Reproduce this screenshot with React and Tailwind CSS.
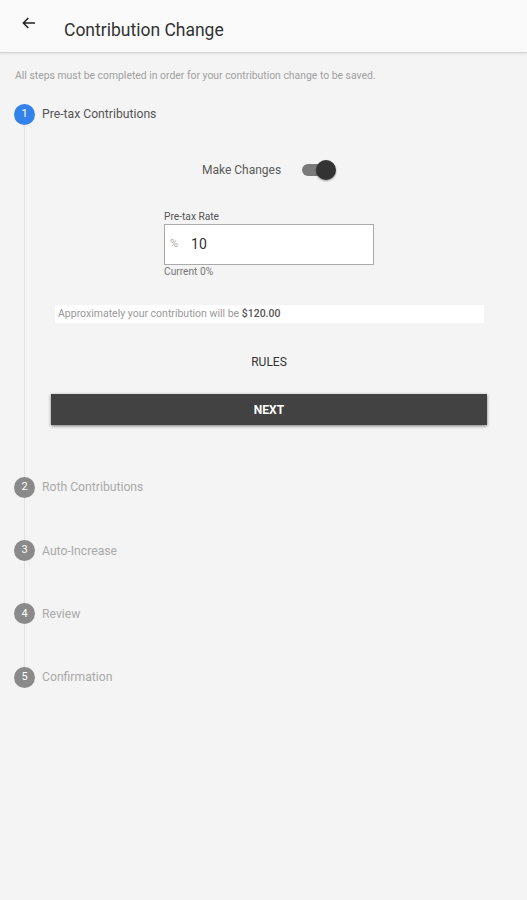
import React from "react";

const steps = ["Roth Contributions", "Auto-Increase", "Review", "Confirmation"];

export default function App() {
  return (
    <div
      className="min-h-[900px] w-full bg-[#f4f4f4]"
      style={{ fontFamily: "Roboto, 'Liberation Sans', sans-serif" }}
    >
      {/* header */}
      <div className="flex h-[53px] items-center border-b border-[#d4d4d4] bg-[#fafafa] shadow-[0_1px_2px_rgba(0,0,0,0.08)]">
        <svg
          className="ml-[21px] mt-[-6px]"
          width="16"
          height="16"
          viewBox="0 0 24 24"
          fill="none"
          stroke="#222"
          strokeWidth="2.2"
        >
          <path d="M21 12H4M11 4.5L3.5 12L11 19.5" />
        </svg>
        <h1 className="ml-[27px] mt-[8px] text-[17.5px] text-[#333]">
          Contribution Change
        </h1>
      </div>

      {/* note */}
      <p className="ml-[15px] mt-[16px] text-[10.4px] leading-[13px] text-[#a0a0a0]">
        All steps must be completed in order for your contribution change to be
        saved.
      </p>

      {/* step 1 */}
      <div className="ml-[14px] mt-[22px] flex items-center gap-[7px]">
        <div className="flex h-[21px] w-[21px] items-center justify-center rounded-full bg-[#3581ea] text-[11px] text-white">
          1
        </div>
        <span className="text-[12.2px] text-[#555]">Pre-tax Contributions</span>
      </div>

      <div className="ml-[24px] h-[352px] border-l border-[#e2e2e2] pl-[26px] pr-[40px] pt-[35px]">
        {/* make changes */}
        <div className="flex h-[20px] items-center justify-center gap-[21px]">
          <span className="text-[12px] text-[#5a5a5a]">Make Changes</span>
          <div className="relative h-[20px] w-[34px]">
            <div className="absolute left-0 top-[4px] h-[12px] w-[28px] rounded-full bg-[#7a7a7a]" />
            <div className="absolute right-0 top-0 h-[20px] w-[20px] rounded-full bg-[#333] shadow-[0_1px_2px_rgba(0,0,0,0.4)]" />
          </div>
        </div>

        {/* rate input */}
        <div className="mx-auto mt-[31px] w-[210px]">
          <div className="text-[10.2px] leading-[12px] text-[#555]">Pre-tax Rate</div>
          <div className="mt-[1px] flex h-[41px] items-center border border-[#aaa] bg-white pl-[5px]">
            <span className="text-[11px] text-[#aaa]">%</span>
            <span className="ml-[13px] text-[14px] text-[#333]">10</span>
          </div>
          <div className="mt-[1px] text-[10.2px] leading-[12px] text-[#777]">Current 0%</div>
        </div>

        {/* approx */}
        <div className="ml-[4px] mr-[3px] mt-[27px] flex h-[18px] items-center bg-white pl-[3px] text-[10.5px] text-[#999]">
          Approximately your contribution will be&nbsp;
          <span className="font-medium text-[#555]">$120.00</span>
        </div>

        <div className="mt-[32px] text-center text-[12px] leading-[14px] text-[#333]">
          RULES
        </div>

        <button className="mt-[25px] flex h-[31px] w-full items-center justify-center bg-[#424242] text-[12px] font-bold text-white shadow-[0_1px_3px_rgba(0,0,0,0.5)]">
          NEXT
        </button>
      </div>

      {/* remaining steps */}
      {steps.map((s, i) => (
        <div key={s}>
          <div className="ml-[14px] flex items-center gap-[7px]">
            <div className="flex h-[21px] w-[21px] items-center justify-center rounded-full bg-[#8a8a8a] text-[11px] text-white">
              {i + 2}
            </div>
            <span className="text-[12.2px] text-[#aaa]">{s}</span>
          </div>
          {i < steps.length - 1 && (
            <div className="ml-[24px] h-[42.2px] border-l border-[#e2e2e2]" />
          )}
        </div>
      ))}
    </div>
  );
}
